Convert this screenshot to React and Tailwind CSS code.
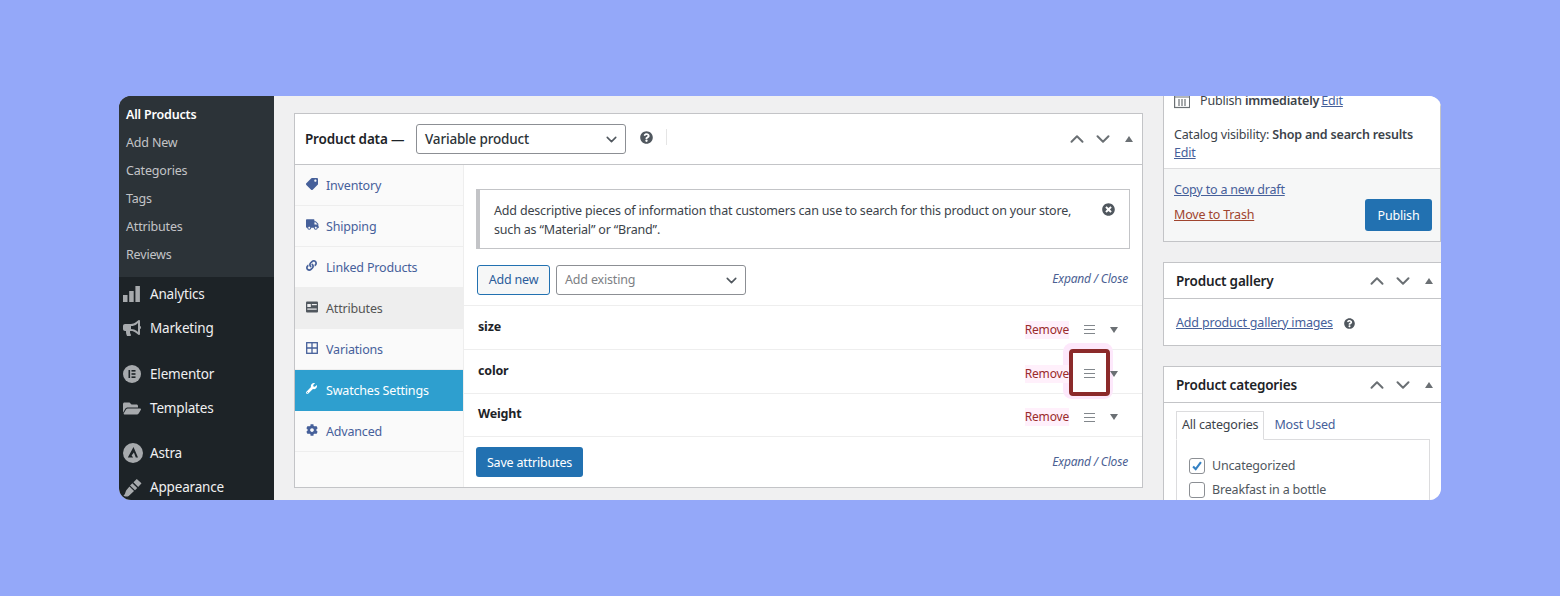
import React from 'react';
import { ChevronDown, ChevronUp } from 'lucide-react';
import { FaBullhorn, FaFolderOpen, FaLink, FaQuestionCircle, FaTag, FaTimesCircle, FaTruck, FaWrench, FaCog } from 'react-icons/fa';

const subItems = ['Add New', 'Categories', 'Tags', 'Attributes', 'Reviews'];

function BarsIcon() {
  return (
    <svg viewBox="0 0 17 17" className="h-[17px] w-[17px] fill-[#a7aaad]">
      <rect x="0" y="9" width="4.5" height="7" />
      <rect x="6.2" y="5" width="4.5" height="11" />
      <rect x="12.4" y="0" width="4.5" height="16" />
    </svg>
  );
}

function ElementorIcon() {
  return (
    <svg viewBox="0 0 18 18" className="h-[18px] w-[18px]">
      <circle cx="9" cy="9" r="9" fill="#a7aaad" />
      <rect x="5.5" y="5" width="1.6" height="8" fill="#1d2327" />
      <rect x="8.5" y="5" width="4" height="1.6" fill="#1d2327" />
      <rect x="8.5" y="8.2" width="4" height="1.6" fill="#1d2327" />
      <rect x="8.5" y="11.4" width="4" height="1.6" fill="#1d2327" />
    </svg>
  );
}

function AstraIcon() {
  return (
    <svg viewBox="0 0 20 20" className="h-5 w-5">
      <circle cx="10" cy="10" r="10" fill="#a7aaad" />
      <path d="M10.5 4 L15 14.5 H12.8 L10.9 9.6 L8.6 12.5 L10.2 14.5 H4.8 Z" fill="#1d2327" />
    </svg>
  );
}

function BrushIcon() {
  return (
    <svg viewBox="0 0 20 20" className="h-[19px] w-[19px] fill-[#a7aaad]">
      <path d="M11 4.5 L14.5 1 L19.5 5.5 L16 9.5 Z" />
      <path d="M9.8 5.6 L15 10.6 L12.6 13 L7.4 8 Z" />
      <path d="M6.8 9 L11.6 13.8 L6 19 C4 20 1.5 19.5 0.5 18.5 C2.5 17.5 2.5 14.5 3.5 13 Z" />
    </svg>
  );
}

function MenuRow({ icon, label, className }) {
  return (
    <div className={`flex shrink-0 items-center text-[13.5px] text-[#f0f0f1] ${className}`}>
      <span className="flex w-[31px] justify-start pl-[4px]">{icon}</span>
      <span>{label}</span>
    </div>
  );
}

function Sidebar() {
  return (
    <aside className="flex w-[155px] shrink-0 flex-col overflow-hidden bg-[#1d2327]">
      <div className="h-[181px] shrink-0 bg-[#2c3338] pl-[7px] pt-[5px] text-[12.5px]">
        <div className="flex h-[28px] items-center font-semibold text-white">All Products</div>
        {subItems.map((item) => (
          <div key={item} className="flex h-[28.2px] items-center text-[#c3c4c7]">{item}</div>
        ))}
      </div>
      <MenuRow className="h-[34px]" icon={<BarsIcon />} label="Analytics" />
      <MenuRow className="h-[34px]" icon={<FaBullhorn className="h-[18px] w-[18px] text-[#a7aaad]" />} label="Marketing" />
      <MenuRow className="mt-[12px] h-[34px]" icon={<ElementorIcon />} label="Elementor" />
      <MenuRow className="h-[34px]" icon={<FaFolderOpen className="h-[17px] w-[18px] text-[#a7aaad]" />} label="Templates" />
      <MenuRow className="mt-[11px] h-[34px]" icon={<AstraIcon />} label="Astra" />
      <MenuRow className="h-[34px]" icon={<BrushIcon />} label="Appearance" />
    </aside>
  );
}

function AttributesIcon() {
  return (
    <svg viewBox="0 0 12 12" className="h-3 w-3">
      <rect x="0" y="0.5" width="12" height="11" rx="1" fill="#50575e" />
      <rect x="1.3" y="3" width="3.5" height="3" fill="#f0f0f1" />
      <rect x="5.8" y="3" width="5" height="1.2" fill="#f0f0f1" />
      <rect x="1.3" y="7.5" width="9.4" height="1.2" fill="#f0f0f1" />
    </svg>
  );
}

function GridIcon() {
  return (
    <svg viewBox="0 0 12 12" className="h-3 w-3 fill-none stroke-[#46609a] stroke-[1.3]">
      <rect x="0.7" y="0.7" width="10.6" height="10.6" />
      <path d="M6 0.7V11.3M0.7 6H11.3" />
    </svg>
  );
}

const tabs = [
  { label: 'Inventory', icon: <FaTag className="h-[12px] w-[12px] rotate-[90deg]" /> },
  { label: 'Shipping', icon: <FaTruck className="h-[13px] w-[13px]" /> },
  { label: 'Linked Products', icon: <FaLink className="h-[11px] w-[11px]" /> },
  { label: 'Attributes', icon: <AttributesIcon />, active: true },
  { label: 'Variations', icon: <GridIcon /> },
  { label: 'Swatches Settings', icon: <FaWrench className="h-[11px] w-[11px]" />, current: true },
  { label: 'Advanced', icon: <FaCog className="h-[12px] w-[12px]" /> },
];

function TabRow({ tab }) {
  let tone = 'border-b border-[#eeeeee] pt-[3px] text-[#46609a]';
  if (tab.active) tone = 'bg-[#eeeeee] pt-[2px] text-[#555555]';
  if (tab.current) tone = 'bg-[#2e9fcf] pt-[2px] text-white';
  return (
    <div className={`flex h-[41px] items-center pl-[11px] text-[12.5px] ${tone}`}>
      <span className="mt-[-6px] flex w-[20px] shrink-0">{tab.icon}</span>
      <span>{tab.label}</span>
    </div>
  );
}

function Sorters() {
  return (
    <div className="flex items-center text-[#6b7074]">
      <ChevronUp className="h-[22px] w-[22px]" strokeWidth={2.2} />
      <ChevronDown className="ml-[4px] h-[22px] w-[22px]" strokeWidth={2.2} />
      <span className="ml-[11px] h-0 w-0 border-x-[4px] border-b-[6px] border-x-transparent border-b-[#6b7074]" />
    </div>
  );
}

function ExpandClose({ className = '' }) {
  return <span className={`text-[12px] italic text-[#4c5f93] ${className}`}>Expand / Close</span>;
}

function AttributeRow({ name, className }) {
  return (
    <div className={`flex shrink-0 items-center border-b border-[#eeeeee] pl-[14px] pr-[24px] pt-[4px] ${className}`}>
      <span className="mt-[-5px] flex-1 text-[12.5px] font-bold text-[#1d2327]">{name}</span>
      <span className="relative z-10 bg-[#fff0fb] text-[12px] text-[#9a2b2b]">Remove</span>
      <span className="ml-[15px] flex w-[11px] flex-col gap-[3px]">
        <span className="h-px bg-[#82878c]" />
        <span className="h-px bg-[#82878c]" />
        <span className="h-px bg-[#82878c]" />
      </span>
      <span className="relative z-10 ml-[15px] h-0 w-0 border-x-[4px] border-t-[6px] border-x-transparent border-t-[#6b7074]" />
    </div>
  );
}

function ProductData() {
  return (
    <section className="flex h-[375px] w-[849px] shrink-0 flex-col border border-[#c3c4c7] bg-white">
      <header className="flex h-[51px] shrink-0 items-center border-b border-[#c3c4c7] pl-[10px] pr-[9px]">
        <span className="w-[111px] shrink-0 text-[13.5px] font-semibold text-[#1d2327]">Product data —</span>
        <div className="flex h-[30px] w-[210px] items-center justify-between rounded-[3px] border border-[#8c8f94] pl-[8px] pr-[5px] text-[13.5px] font-medium text-[#2c3338]">
          Variable product
          <ChevronDown className="h-[17px] w-[17px] text-[#50575e]" strokeWidth={2.2} />
        </div>
        <FaQuestionCircle className="ml-[14px] mt-[-4px] h-[13px] w-[13px] text-[#50575e]" />
        <span className="ml-[13px] mt-[-4px] h-[16px] w-px bg-[#e5e5e5]" />
        <span className="flex-1" />
        <Sorters />
      </header>
      <div className="flex min-h-0 flex-1">
        <nav className="w-[169px] shrink-0 border-r border-[#eeeeee] bg-[#fafafa]">
          {tabs.map((tab) => <TabRow key={tab.label} tab={tab} />)}
        </nav>
        <div className="flex min-w-0 flex-1 flex-col">
          <div className="mx-[12px] mt-[24px] flex h-[60px] shrink-0 border border-l-[4px] border-[#c3c4c7] pl-[14px] pr-[14px] pt-[11px] text-[12.5px] leading-[19px] text-[#3c434a]">
            <p className="flex-1 pr-[20px]">Add descriptive pieces of information that customers can use to search for this product on your store, such as “Material” or “Brand”.</p>
            <FaTimesCircle className="mt-[2px] h-[13px] w-[13px] shrink-0 text-[#50575e]" />
          </div>
          <div className="flex h-[57px] shrink-0 items-center border-b border-[#eeeeee] pl-[13px] pr-[14px] pt-[6px]">
            <div className="flex h-[30px] w-[73px] items-center justify-center rounded-[3px] border border-[#2271b1] bg-[#f6f7f7] pt-px text-[12.5px] text-[#2b5d9b]">Add new</div>
            <div className="ml-[6px] flex h-[30px] w-[190px] items-center justify-between rounded-[3px] border border-[#8c8f94] pl-[8px] pr-[5px] text-[12.5px] text-[#7d8084]">
              <span className="pt-px">Add existing</span>
              <ChevronDown className="h-[17px] w-[17px] text-[#50575e]" strokeWidth={2.2} />
            </div>
            <span className="flex-1" />
            <ExpandClose className="mb-[3px]" />
          </div>
          <AttributeRow name="size" className="h-[44px]" />
          <AttributeRow name="color" className="h-[44px]" />
          <AttributeRow name="Weight" className="h-[43px]" />
          <div className="flex flex-1 items-center pl-[12px] pr-[14px]">
            <div className="flex h-[30px] w-[107px] items-center justify-center rounded-[3px] bg-[#2271b1] pt-[2px] text-[12.5px] text-white">Save attributes</div>
            <span className="flex-1" />
            <ExpandClose />
          </div>
        </div>
      </div>
    </section>
  );
}

function SideBoxHeader({ title }) {
  return (
    <div className="flex h-[36px] items-center justify-between border-b border-[#c3c4c7] pl-[12px] pr-[8px]">
      <span className="mt-[2px] text-[13.5px] font-semibold text-[#1d2327]">{title}</span>
      <Sorters />
    </div>
  );
}

function RightColumn() {
  return (
    <div className="flex w-[278px] shrink-0 flex-col overflow-hidden">
      <div className="h-[146px] shrink-0 border-x border-b border-[#c3c4c7] bg-white">
        <div className="flex h-[73px] flex-col border-b border-[#dcdcde] px-[10px] text-[12.5px] leading-[18px] text-[#3c434a]">
          <div className="flex h-[10px] items-center">
            <svg viewBox="0 0 16 16" className="mr-[10px] h-[16px] w-[16px] fill-none stroke-[#6b7074] stroke-[1.2]">
              <rect x="0.6" y="1" width="15" height="13.5" />
              <path d="M1 4h14M5 6v7M8 6v7M11 6v7" />
            </svg>
            Publish <b className="ml-[3px] font-semibold">immediately</b> <span className="ml-[2px] text-[#46609a] underline">Edit</span>
          </div>
          <div className="mt-[20px]">Catalog visibility: <b className="font-semibold">Shop and search results</b></div>
          <div className="text-[#46609a] underline">Edit</div>
        </div>
        <div className="flex h-[72px] items-start justify-between bg-[#f6f7f7] pl-[10px] pr-[8px] pt-[12px] text-[12.5px]">
          <div className="flex flex-col gap-[7px] leading-[18px]">
            <span className="text-[#46609a] underline">Copy to a new draft</span>
            <span className="text-[#a0452f] underline">Move to Trash</span>
          </div>
          <div className="mt-[18px] flex h-[32px] w-[67px] items-center justify-center rounded-[3px] bg-[#2271b1] pt-[2px] text-white">Publish</div>
        </div>
      </div>
      <div className="mt-[20px] h-[84px] shrink-0 border border-r-0 border-[#c3c4c7] bg-white">
        <SideBoxHeader title="Product gallery" />
        <div className="flex items-center pl-[12px] pt-[15px] text-[12.5px] text-[#46609a]">
          <span className="underline">Add product gallery images</span>
          <FaQuestionCircle className="ml-[11px] h-[11px] w-[11px] text-[#50575e]" />
        </div>
      </div>
      <div className="mt-[20px] flex-1 border border-r-0 border-[#c3c4c7] bg-white">
        <SideBoxHeader title="Product categories" />
        <div className="px-[12px] pt-[8px] text-[12.5px]">
          <div className="flex h-[29px]">
            <div className="z-10 flex h-[29px] items-center border border-b-white border-[#dcdcde] px-[5px] text-[#3c434a]">All categories</div>
            <div className="flex items-center pl-[10px] text-[#46609a]">Most Used</div>
          </div>
          <div className="mt-[-1px] h-[80px] w-[254px] border border-[#dcdcde] pl-[12px] pt-[14px] text-[#50575e]">
            <label className="flex h-[24px] items-center">
              <span className="mr-[7px] flex h-[16px] w-[16px] items-center justify-center rounded-[3px] border border-[#8c8f94]">
                <svg viewBox="0 0 16 16" className="h-[14px] w-[14px] fill-none stroke-[#3582c4] stroke-[2.4]">
                  <path d="M3.5 8.5l3 3 6-8" />
                </svg>
              </span>
              Uncategorized
            </label>
            <label className="flex h-[24px] items-center">
              <span className="mr-[7px] h-[16px] w-[16px] rounded-[3px] border border-[#8c8f94]" />
              Breakfast in a bottle
            </label>
          </div>
        </div>
      </div>
    </div>
  );
}

export default function App() {
  return (
    <div className="flex h-[596px] w-[1560px] items-start bg-[#94a8f9] pl-[119px] pt-[96px] font-['Noto_Sans',sans-serif] tracking-[-0.18px]">
      <div className="relative flex h-[404px] w-[1322px] overflow-hidden rounded-[12px] bg-[#f0f0f1]">
        <Sidebar />
        <main className="flex min-w-0 flex-1 gap-[20px] pl-[20px]">
          <div className="pt-[17px]">
            <ProductData />
          </div>
          <RightColumn />
        </main>
        {/* red highlight drawn over the drag handle of the color row */}
        <div className="absolute left-[950px] top-[253px] h-[47px] w-[41px] rounded-[4px] border-[4px] border-[#8b2a2a] shadow-[-1.5px_-1.5px_0_4.5px_#fde8fb]" />
      </div>
    </div>
  );
}
